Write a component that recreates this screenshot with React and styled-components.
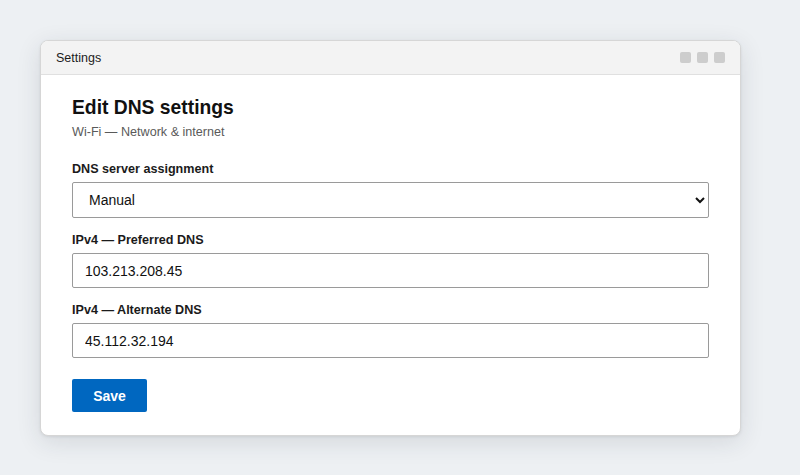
import React from 'react';
import styled, { createGlobalStyle } from 'styled-components';

const Global = createGlobalStyle`
  html, body { margin: 0; padding: 0; }
  body {
    background: #edf0f3;
    font-family: "Liberation Sans", Arial, sans-serif;
    color: #1b1b1b;
  }
  * { box-sizing: border-box; }
`;

const Page = styled.div`
  padding: 40px;
`;

const Window = styled.div`
  width: 701px;
  height: 396px;
  background: #fff;
  border: 1px solid #d6d6d6;
  border-radius: 8px;
  box-shadow: 0 6px 24px rgba(30, 40, 60, 0.12), 0 1px 3px rgba(0, 0, 0, 0.08);
  overflow: hidden;
  display: flex;
  flex-direction: column;
`;

const TitleBar = styled.div`
  height: 34px;
  flex: none;
  background: #f3f3f3;
  border-bottom: 1px solid #e0e0e0;
  display: flex;
  align-items: center;
  justify-content: space-between;
  padding: 0 15px 0 15px;
`;

const Title = styled.span`
  font-size: 12.5px;
  color: #1b1b1b;
`;

const Controls = styled.div`
  display: flex;
  gap: 6px;
`;

const Ctrl = styled.span`
  width: 11px;
  height: 11px;
  border-radius: 2px;
  background: #cdcdcd;
`;

const Body = styled.div`
  padding: 21px 31px 24px 31px;
  display: flex;
  flex-direction: column;
`;

const Heading = styled.h1`
  margin: 0;
  font-size: 19.3px;
  line-height: 24px;
  font-weight: 700;
  color: #111;
`;

const Sub = styled.p`
  margin: 4px 0 0 0;
  font-size: 12.6px;
  line-height: 16px;
  color: #5a5a5a;
`;

const Field = styled.div`
  margin-top: ${p => p.first ? '21px' : '14px'};
  display: flex;
  flex-direction: column;
`;

const Label = styled.label`
  font-size: 12.6px;
  line-height: 16px;
  font-weight: 700;
  color: #1b1b1b;
  margin-bottom: 5px;
`;

const Select = styled.select`
  height: 36px;
  width: 100%;
  font-family: "Liberation Sans", Arial, sans-serif;
  font-size: 14px;
  padding: 0 8px 0 12px;
  border: 1px solid #9a9a9a;
  border-radius: 2px;
  background: #fff;
  color: #111;
`;

const Input = styled.input`
  height: 35px;
  width: 100%;
  font-family: "Liberation Sans", Arial, sans-serif;
  font-size: 14px;
  padding: 0 12px;
  border: 1px solid #9a9a9a;
  border-radius: 2px;
  color: #111;
  background: #fff;
`;

const Save = styled.button`
  margin-top: 21px;
  align-self: flex-start;
  width: 75px;
  height: 33px;
  border: none;
  border-radius: 2px;
  background: #0067c0;
  color: #fff;
  font-family: "Liberation Sans", Arial, sans-serif;
  font-size: 14px;
  font-weight: 700;
  cursor: pointer;
`;

export default function App() {
  return (
    <Page>
      <Global />
      <Window>
        <TitleBar>
          <Title>Settings</Title>
          <Controls>
            <Ctrl />
            <Ctrl />
            <Ctrl />
          </Controls>
        </TitleBar>
        <Body>
          <Heading>Edit DNS settings</Heading>
          <Sub>Wi-Fi — Network &amp; internet</Sub>
          <Field first>
            <Label>DNS server assignment</Label>
            <Select defaultValue="Manual">
              <option>Automatic (DHCP)</option>
              <option>Manual</option>
            </Select>
          </Field>
          <Field>
            <Label>IPv4 — Preferred DNS</Label>
            <Input defaultValue="103.213.208.45" />
          </Field>
          <Field>
            <Label>IPv4 — Alternate DNS</Label>
            <Input defaultValue="45.112.32.194" />
          </Field>
          <Save>Save</Save>
        </Body>
      </Window>
    </Page>
  );
}
